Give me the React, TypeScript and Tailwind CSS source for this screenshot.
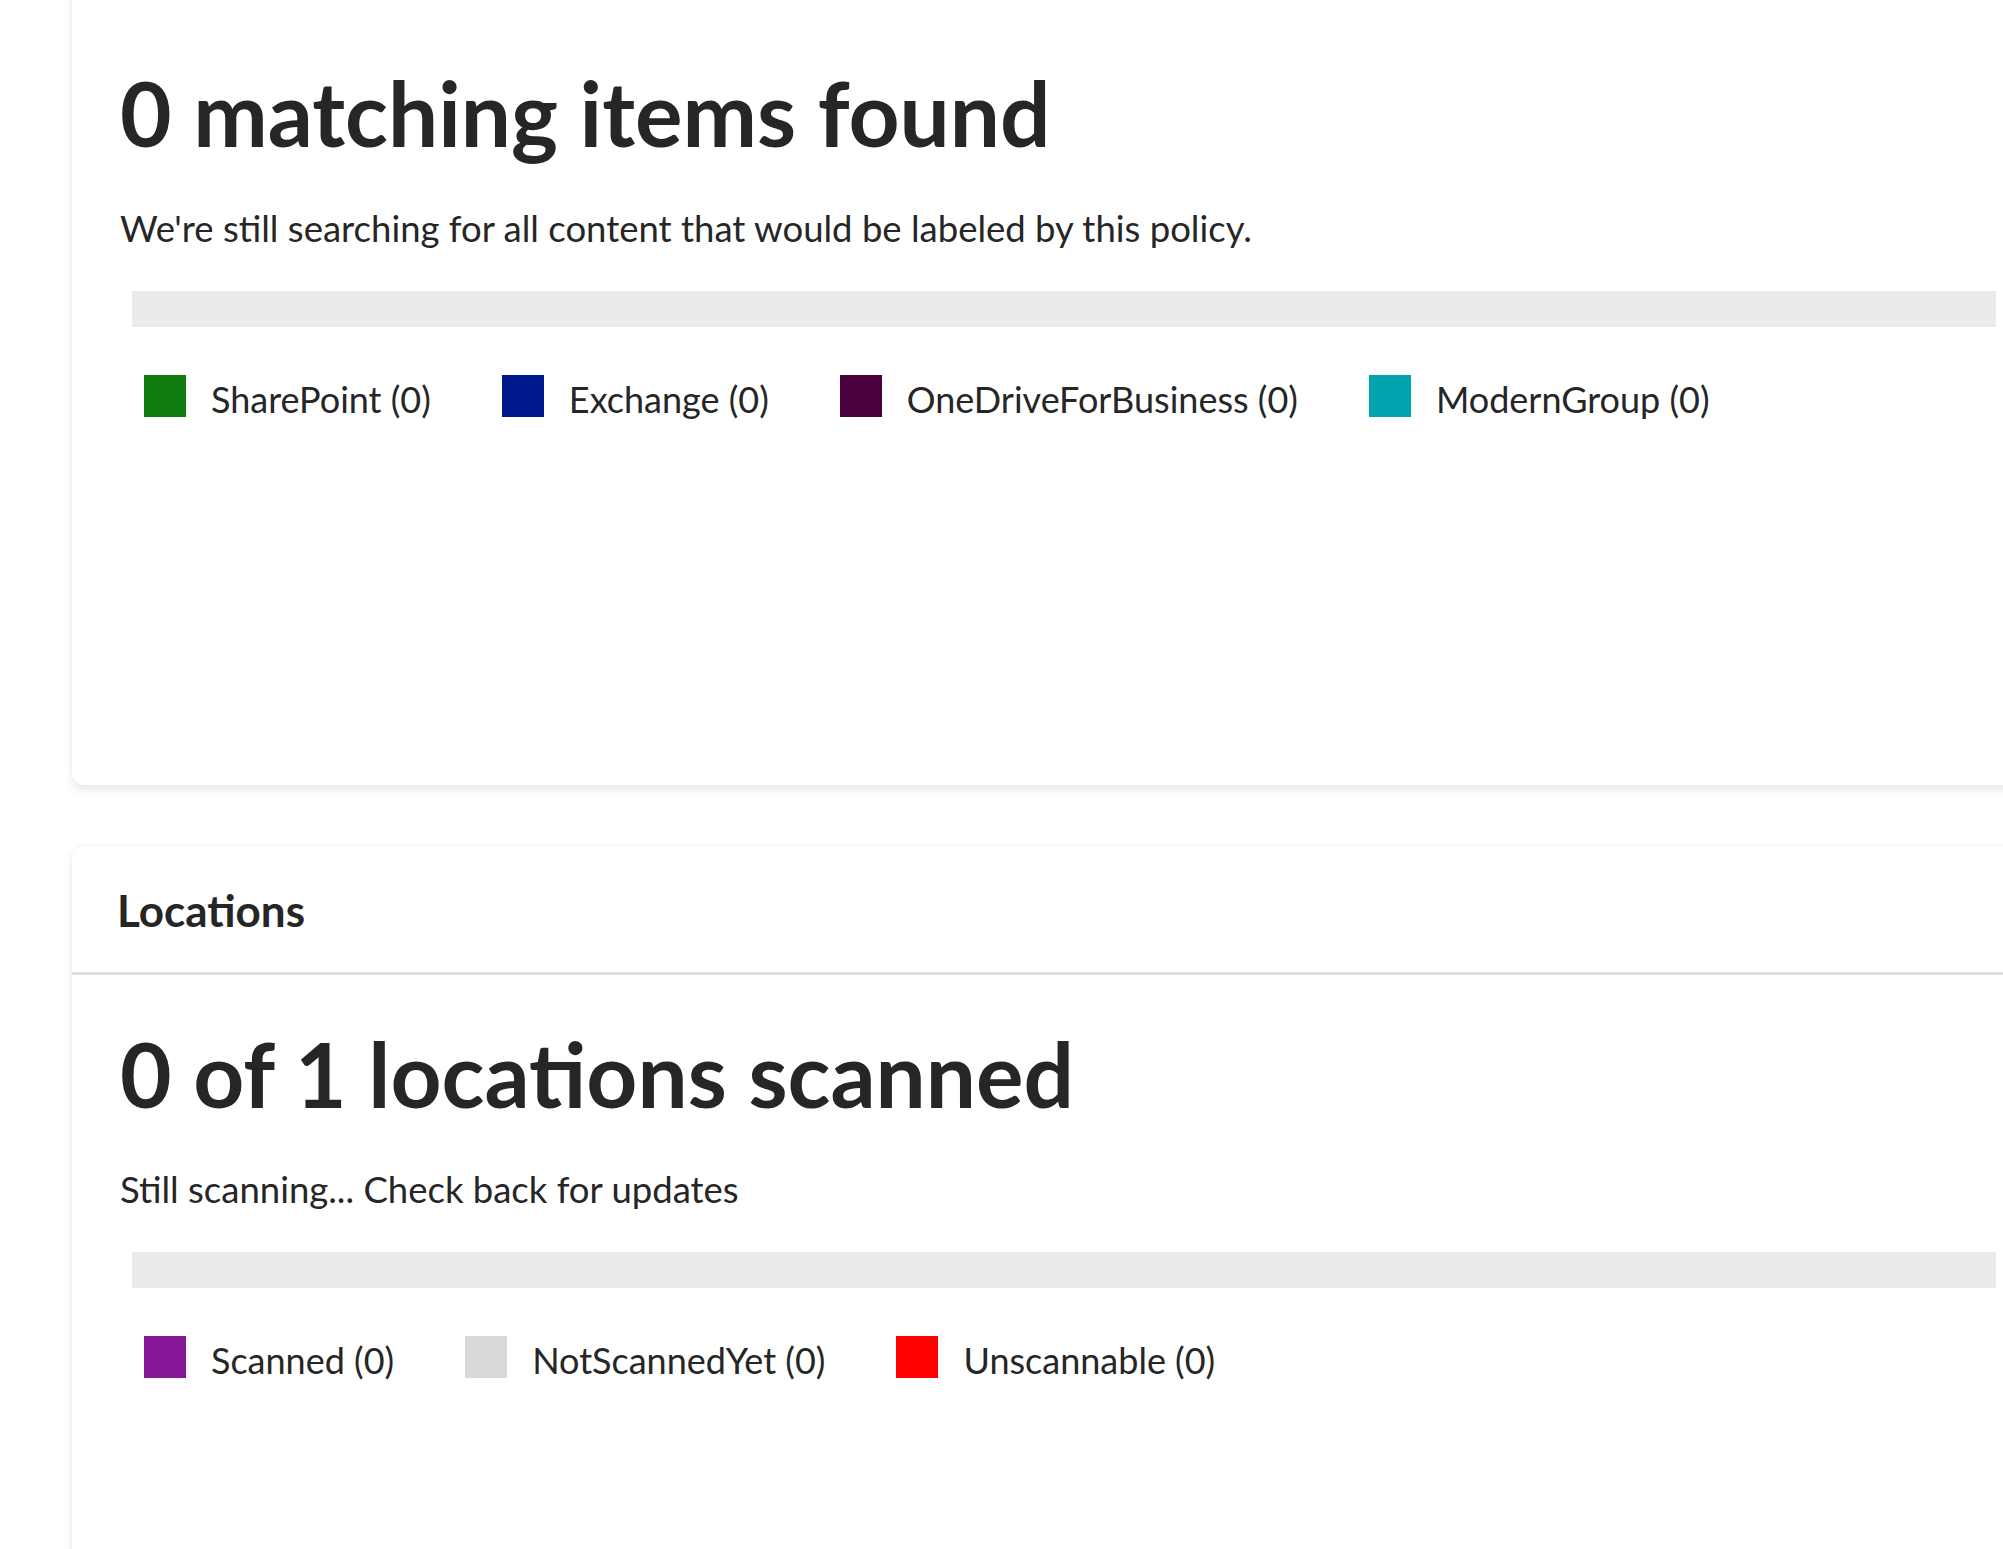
const sources = [
  { label: "SharePoint (0)", color: "bg-[#107c10]" },
  { label: "Exchange (0)", color: "bg-[#001a8d]" },
  { label: "OneDriveForBusiness (0)", color: "bg-[#4b003f]" },
  { label: "ModernGroup (0)", color: "bg-[#00a3ae]" },
];

const scanStates = [
  { label: "Scanned (0)", color: "bg-[#881798]" },
  { label: "NotScannedYet (0)", color: "bg-[#d9d9d9]" },
  { label: "Unscannable (0)", color: "bg-[#ff0000]" },
];

function Legend({ items }: { items: { label: string; color: string }[] }) {
  return (
    <div className="mt-[48px] ml-[24px] flex items-start gap-[71px]">
      {items.map((item) => (
        <div key={item.label} className="flex items-start gap-[25px]">
          <span className={`block w-[42px] h-[42px] shrink-0 ${item.color}`} />
          <span className="pt-[3px] text-[36px] leading-[42px] text-[#262626] whitespace-nowrap">{item.label}</span>
        </div>
      ))}
    </div>
  );
}

function Summary({ title, note, items }: { title: string; note: string; items: { label: string; color: string }[] }) {
  return (
    <div>
      <h1 className="text-[89px] leading-[100px] font-bold text-[#262626] whitespace-nowrap">{title}</h1>
      <p className="mt-[39px] text-[36.5px] leading-[52px] text-[#262626] whitespace-nowrap">{note}</p>
      <div className="mt-[37px] ml-[12px] w-[1864px] h-[36px] bg-[#ebebeb]" />
      <Legend items={items} />
    </div>
  );
}

export default function App() {
  return (
    <div className="w-full h-[1549px] overflow-hidden bg-white font-['Lato',sans-serif]">
      <div className="pl-[72px]">
        {/* matching items card, top cut off by the viewport */}
        <div className="-mt-[24px] w-[1960px] rounded-[12px] bg-white pt-[87px] pl-[48px] pb-[365px] shadow-[0_5px_10px_rgba(0,0,0,0.09),0_-1px_3px_rgba(0,0,0,0.03)]">
          <Summary
            title="0 matching items found"
            note="We're still searching for all content that would be labeled by this policy."
            items={sources}
          />
        </div>

        <div className="mt-[61px] w-[1960px] rounded-[12px] bg-white shadow-[0_5px_10px_rgba(0,0,0,0.09),0_-1px_3px_rgba(0,0,0,0.04)]">
          <div className="pt-[39px] pb-[37px] pl-[45px] border-b-[3px] border-[#e0e0e0]">
            <h2 className="text-[44px] leading-[50px] font-bold text-[#262626]">Locations</h2>
          </div>
          <div className="pt-[49px] pl-[48px] pb-[200px]">
            <Summary
              title="0 of 1 locations scanned"
              note="Still scanning... Check back for updates"
              items={scanStates}
            />
          </div>
        </div>
      </div>
    </div>
  );
}
